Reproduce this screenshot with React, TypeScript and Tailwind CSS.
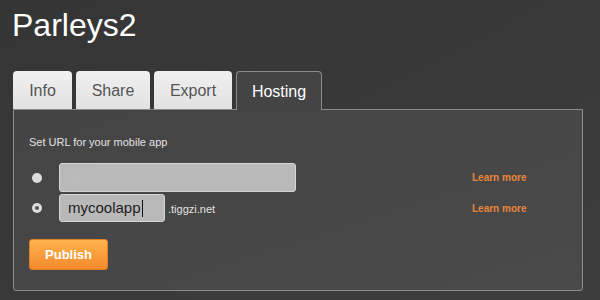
export default function App() {
  const tabs = [
    { label: "Info", w: "w-[59px]" },
    { label: "Share", w: "w-[74px]" },
    { label: "Export", w: "w-[78px]" },
  ];

  return (
    <div className="w-[600px] h-[300px] overflow-hidden bg-gradient-to-br from-[#353535] to-[#3d3d3d] px-[13px] font-['Liberation_Sans',Arial,sans-serif]">
      {/* Title */}
      <h1 className="pt-[6px] text-[32px] leading-[38px] text-white -ml-px">
        Parleys2
      </h1>

      {/* Tabs */}
      <div className="mt-[27px] flex items-end gap-[4px] relative z-10">
        {tabs.map((t) => (
          <div
            key={t.label}
            className={`${t.w} h-[38px] pt-[2px] rounded-t-[4px] bg-gradient-to-b from-[#f0f0f0] to-[#e2e2e2] flex items-center justify-center text-[16px] text-[#555555]`}
          >
            {t.label}
          </div>
        ))}
        <div className="w-[86px] h-[39px] pt-[2px] -mb-px rounded-t-[4px] border border-b-0 border-[#8c8c8c] bg-[#444444] flex items-center justify-center text-[16px] text-white">
          Hosting
        </div>
      </div>

      {/* Panel */}
      <div className="w-[570px] h-[182px] border border-[#8c8c8c] rounded-b-[3px] bg-gradient-to-br from-[#444444] to-[#4a4a4a] pl-[15px] pt-[26px]">
        <p className="text-[11px] leading-[13px] text-[#e2e2e2]">
          Set URL for your mobile app
        </p>

        <div className="mt-[14px] flex flex-col gap-[2px]">
          {/* Row 1 */}
          <div className="flex items-center">
            <div className="w-[30px] flex">
              <span className="ml-[3px] w-[10px] h-[10px] rounded-full bg-[#dcdcdc]" />
            </div>
            <div className="w-[413px]">
              <div className="w-[237px] h-[29px] rounded-[3px] border border-[#d6d6d6] bg-[#b9b9b9] flex items-center pl-[10px] text-[15px] text-[#bcbcbc]">
                your custom domain
              </div>
            </div>
            <span className="text-[10px] font-bold text-[#e8853a]">Learn more</span>
          </div>

          {/* Row 2 */}
          <div className="flex items-center">
            <div className="w-[30px] flex">
              <span className="ml-[3px] w-[10px] h-[10px] rounded-full bg-[#dcdcdc] flex items-center justify-center">
                <span className="w-[4px] h-[4px] rounded-full bg-[#555555]" />
              </span>
            </div>
            <div className="w-[413px] flex items-center">
              <div className="w-[106px] h-[28px] rounded-[3px] border border-[#d6d6d6] bg-[#b9b9b9] flex items-center pl-[8px] text-[15px] text-[#222222]">
                mycoolapp
                <span className="ml-px w-px h-[17px] bg-[#111111]" />
              </div>
              <span className="ml-[3px] mt-[2px] text-[11px] text-[#e2e2e2]">.tiggzi.net</span>
            </div>
            <span className="text-[10px] font-bold text-[#e8853a]">Learn more</span>
          </div>
        </div>

        <button className="mt-[17px] w-[79px] h-[31px] rounded-[3px] border border-[#e07f25] bg-gradient-to-b from-[#ffb24d] to-[#f38a2b] text-[13px] font-bold text-white">
          Publish
        </button>
      </div>
    </div>
  );
}
